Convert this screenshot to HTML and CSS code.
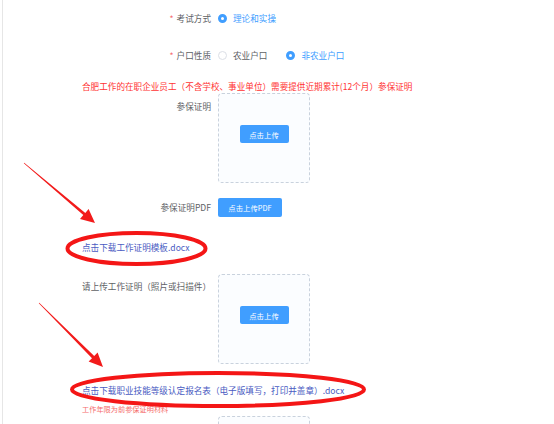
FILE: index.html
```html
<!DOCTYPE html>
<html lang="zh-CN">

<head>
  <meta charset="UTF-8">
  <meta name="viewport" content="width=device-width, initial-scale=1.0">
  <title>职业技能等级认定报名</title>
  <link rel="stylesheet" href="styles.css">
</head>

<body>
  <div class="page">
    <div class="form-item row-exam">
      <div class="label"><span class="star">*</span>考试方式</div>
      <div class="radio-group">
        <label class="radio checked"><span class="dot"></span>理论和实操</label>
      </div>
    </div>

    <div class="form-item row-hukou">
      <div class="label"><span class="star">*</span>户口性质</div>
      <div class="radio-group">
        <label class="radio"><span class="dot"></span>农业户口</label>
        <label class="radio checked"><span class="dot"></span>非农业户口</label>
      </div>
    </div>

    <div class="notice">合肥工作的在职企业员工（不含学校、事业单位）需要提供近期累计(12个月）参保证明</div>

    <div class="form-item">
      <div class="label label-box">参保证明</div>
      <div class="upload-box">
        <button class="btn">点击上传</button>
      </div>
    </div>

    <div class="form-item row-pdf">
      <div class="label label-btn">参保证明PDF</div>
      <button class="btn btn-pdf">点击上传PDF</button>
    </div>

    <a class="download download-1" href="#">点击下载工作证明模板.docx</a>

    <div class="form-item row-work">
      <div class="label label-box2">请上传工作证明（照片或扫描件）</div>
      <div class="upload-box">
        <button class="btn">点击上传</button>
      </div>
    </div>

    <a class="download download-2" href="#">点击下载职业技能等级认定报名表（电子版填写，打印并盖章）.docx</a>
    <div class="tip">工作年限为前参保证明材料</div>

    <div class="form-item row-last">
      <div class="label"></div>
      <div class="upload-box upload-cut"></div>
    </div>
  </div>

  <svg class="marks" width="554" height="424" viewBox="0 0 554 424">
    <polygon points="24.2,162.8 85.3,212.9 88.6,209 95,223 80,219 83.3,215.1 23.8,163.2" />
    <polygon points="39.2,302.8 94.2,356 97.6,352.6 103,367 88.6,361.6 92,358.2 38.8,303.2" />
    <ellipse cx="136.5" cy="248.5" rx="69" ry="15.5" />
    <ellipse cx="218" cy="389.5" rx="146" ry="16.5" />
  </svg>
</body>

</html>
```

FILE: styles.css
```css
body {
  margin: 0;
  font-family: "Noto Sans CJK SC", "Noto Sans", sans-serif;
  font-size: 8.6px;
  color: #606266;
  background: #fff;
  position: relative;
  overflow: hidden;
  height: 424px;
}

.page {
  margin-left: 2px;
  border-left: 1px solid #e6e6e6;
  padding: 9px 0 0 79px;
  height: 424px;
  box-sizing: border-box;
  overflow: hidden;
}

.form-item {
  display: flex;
  gap: 7px;
}

.label {
  width: 129px;
  flex-shrink: 0;
  text-align: right;
  line-height: 18px;
  white-space: nowrap;
}

.star {
  color: #f56c6c;
  margin-right: 3px;
}

.row-hukou {
  margin-top: 19px;
}

.radio-group {
  display: flex;
  align-items: center;
  gap: 19px;
  line-height: 18px;
}

.radio {
  display: flex;
  align-items: center;
  gap: 6px;
  color: #606266;
}

.radio .dot {
  width: 9px;
  height: 9px;
  box-sizing: border-box;
  border-radius: 50%;
  border: 1px solid #dcdfe6;
  background: #fff;
}

.radio.checked {
  color: #409eff;
}

.radio.checked .dot {
  border: 3px solid #409eff;
  background: #fff;
}

.notice {
  color: #f33;
  line-height: 13px;
  margin-top: 16px;
  white-space: nowrap;
}

.label-box {
  line-height: 26px;
}

.upload-box {
  width: 92px;
  height: 90px;
  box-sizing: border-box;
  border: 1px dashed #c9d2dd;
  border-radius: 4px;
  background: #fbfdff;
  display: flex;
  justify-content: center;
  align-items: flex-start;
  padding-top: 31px;
}

.upload-cut {
  height: 20px;
}

.btn {
  font-family: inherit;
  font-size: 7.4px;
  color: #fff;
  background: #409eff;
  border: none;
  border-radius: 2px;
  width: 49px;
  height: 18px;
  padding: 0;
  cursor: pointer;
}

.row-pdf {
  margin-top: 15px;
}

.label-btn {
  line-height: 19px;
}

.btn-pdf {
  width: 64px;
  height: 19px;
}

.download {
  display: block;
  color: #4a5bc2;
  text-decoration: none;
  line-height: 14px;
  white-space: nowrap;
}

.download-1 {
  margin-top: 23px;
}

.row-work {
  margin-top: 20px;
}

.label-box2 {
  line-height: 24px;
}

.download-2 {
  margin-top: 19px;
}

.tip {
  color: #f56c6c;
  font-size: 7.2px;
  line-height: 10px;
  margin-top: 7px;
}

.row-last {
  margin-top: 2px;
}

.marks {
  position: absolute;
  top: 0;
  left: 0;
  pointer-events: none;
}

.marks polygon {
  fill: #f21b1b;
}

.marks ellipse {
  fill: none;
  stroke: #f41616;
  stroke-width: 4;
}
```
